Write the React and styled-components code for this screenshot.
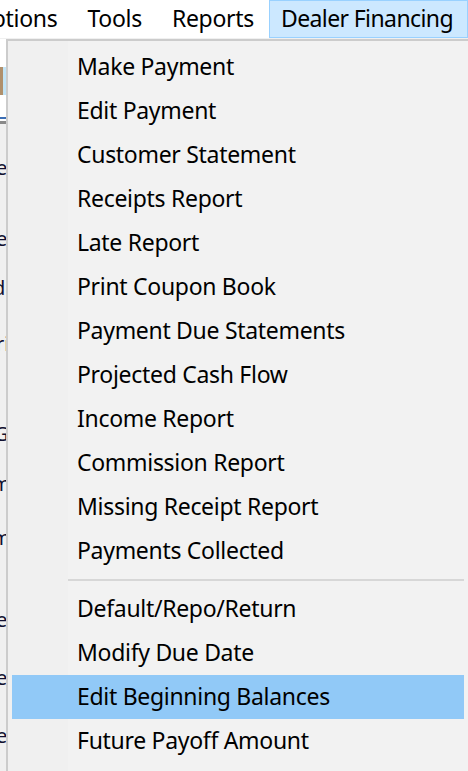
import React from 'react';
import styled, { createGlobalStyle } from 'styled-components';

const GlobalStyle = createGlobalStyle`
  html, body {
    margin: 0;
    padding: 0;
    background: #fff;
    overflow: hidden;
  }
`;

const UI_FONT = `"Noto Sans", "Open Sans", "DejaVu Sans", sans-serif`;

const Screen = styled.div`
  width: 468px;
  height: 771px;
  overflow: hidden;
  display: flex;
  flex-direction: column;
  font-family: ${UI_FONT};
  color: #000;
  background: #fff;
`;

const MenuBar = styled.div`
  height: 38px;
  display: flex;
  align-items: stretch;
  background: #fff;
  white-space: nowrap;
  flex-shrink: 0;
`;

const BarItem = styled.div`
  display: flex;
  align-items: center;
  padding: 0 14px 2px ${p => (p.$open ? '11px' : '14px')};
  font-size: 23px;
  letter-spacing: ${p => (p.$open ? '-0.6px' : '-0.3px')};
  box-sizing: border-box;
  flex-shrink: 0;
  border: 1px solid ${p => (p.$open ? '#99d1ff' : 'transparent')};
  background: ${p => (p.$open ? '#cce8ff' : 'transparent')};
  margin-left: ${p => (p.$cut ? '-41px' : '0')};
`;

const Gap = styled.div`
  height: 1px;
  background: #f0f0f0;
  flex-shrink: 0;
`;

const Body = styled.div`
  flex: 1;
  display: flex;
  min-height: 0;
`;

// sliver of the window that sits under the open menu
const Behind = styled.div`
  width: 6px;
  flex-shrink: 0;
  background: linear-gradient(to bottom, #fff 0, #fff 85px, #f0f0f0 85px);
  display: flex;
  flex-direction: column;
  overflow: hidden;
`;

const Swatch = styled.div`
  margin-top: ${p => p.$gap}px;
  height: ${p => p.$h}px;
  display: flex;
  flex-shrink: 0;
  & > i {
    flex: 1;
  }
  & > i:first-child {
    background: #b0906c;
  }
  & > i:last-child {
    background: #c2e4f6;
  }
`;

const Frag = styled.div`
  margin-top: ${p => p.$gap}px;
  height: ${p => p.$h || 14}px;
  display: flex;
  align-items: center;
  font-size: 20px;
  line-height: 1;
  color: #101030;
  white-space: nowrap;
  flex-shrink: 0;
  & > span {
    margin-left: ${p => p.$shift || -4}px;
  }
`;

const Rule = styled.div`
  margin-top: ${p => p.$gap}px;
  height: ${p => p.$h}px;
  background: ${p => p.$color};
  flex-shrink: 0;
`;

const Dropdown = styled.div`
  width: 464px;
  flex-shrink: 0;
  box-sizing: border-box;
  border-left: 2px solid #cccccc;
  border-top: 2px solid #cccccc;
  border-right: 2px solid #cccccc;
  background: linear-gradient(to right, #f0f0f0 0, #f0f0f0 60px, #f2f2f2 60px);
  padding: 4px 4px 0 4px;
  display: flex;
  flex-direction: column;
`;

const Item = styled.div`
  height: 44px;
  display: flex;
  align-items: center;
  padding-left: 65px;
  padding-bottom: 2px;
  box-sizing: border-box;
  font-size: 23px;
  letter-spacing: -0.3px;
  white-space: nowrap;
  background: ${p => (p.$active ? '#91c9f7' : 'transparent')};
`;

const Separator = styled.div`
  height: 2px;
  margin: 6px 0 6px 56px;
  background: #d7d7d7;
  flex-shrink: 0;
`;

const topItems = [
  'Make Payment',
  'Edit Payment',
  'Customer Statement',
  'Receipts Report',
  'Late Report',
  'Print Coupon Book',
  'Payment Due Statements',
  'Projected Cash Flow',
  'Income Report',
  'Commission Report',
  'Missing Receipt Report',
  'Payments Collected',
];

const bottomItems = [
  'Default/Repo/Return',
  'Modify Due Date',
  'Edit Beginning Balances',
  'Future Payoff Amount',
];

export default function App() {
  return (
    <>
      <GlobalStyle />
      <Screen>
        <MenuBar>
          <BarItem $cut>Options</BarItem>
          <BarItem>Tools</BarItem>
          <BarItem>Reports</BarItem>
          <BarItem $open>Dealer Financing</BarItem>
        </MenuBar>
        <Gap />
        <Body>
          <Behind>
            <Swatch $gap={28} $h={28}>
              <i />
              <i />
            </Swatch>
            <Rule $gap={22} $h={2} $color="#3c6eb4" />
            <Rule $gap={2} $h={3} $color="#8a8a8a" />
            <Frag $gap={37}><span>e</span></Frag>
            <Frag $gap={57}><span>e</span></Frag>
            <Frag $gap={33} $h={18} $shift={-7}><span>d</span></Frag>
            <Frag $gap={39} $h={16} $shift={-4}><span>ri</span></Frag>
            <Frag $gap={75} $h={14} $shift={-6}><span>G</span></Frag>
            <Frag $gap={36} $h={14} $shift={-8}><span>m</span></Frag>
            <Frag $gap={40} $h={14} $shift={-8}><span>m</span></Frag>
            <Frag $gap={68}><span>e</span></Frag>
            <Frag $gap={44}><span>e</span></Frag>
            <Frag $gap={44}><span>e</span></Frag>
          </Behind>
          <Dropdown>
            {topItems.map(label => (
              <Item key={label}>{label}</Item>
            ))}
            <Separator />
            {bottomItems.map(label => (
              <Item key={label} $active={label === 'Edit Beginning Balances'}>
                {label}
              </Item>
            ))}
          </Dropdown>
        </Body>
      </Screen>
    </>
  );
}
